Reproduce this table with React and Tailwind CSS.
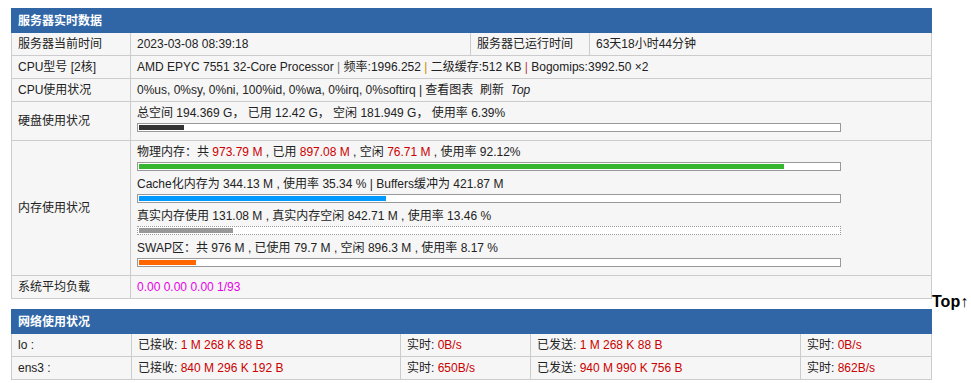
// Server probe: realtime data + network tables
const font = "font-['Liberation_Sans','Noto_Sans_CJK_SC',sans-serif]";
const cell = "border border-[#cccccc] px-[6px] py-[3px] leading-[16px] align-middle";

// Usage bar: 700px track inside 1px border + 1px padding
function Bar({ pct, color, dotted }) {
    return (
        <div className={`mt-[2px] mb-[5px] w-[704px] h-[9px] p-px bg-white border border-[#999999] ${dotted ? "border-dotted" : "border-solid"}`}>
            <div className={`h-full ${color}`} style={{ width: `${pct}%` }}></div>
        </div>
    );
}

const Red = ({ children }) => <span className="text-[#cc0000]">{children}</span>;

export default function App() {
    return (
        <div className={`pt-2 pl-[11px] text-[12px] text-[#222222] bg-white min-h-screen ${font}`}>
            <div className="flex items-end">
                <table className="w-[920px] table-fixed bg-[#f6f6f6]">
                    <colgroup>
                        <col className="w-[119px]" />
                        <col className="w-[340px]" />
                        <col className="w-[119px]" />
                        <col className="w-[342px]" />
                    </colgroup>
                    <thead>
                        <tr>
                            <th colSpan={4} className="h-[24px] bg-[#3066a6] border border-[#3066a6] px-[6px] text-left text-white font-bold leading-[16px]">
                                服务器实时数据
                            </th>
                        </tr>
                    </thead>
                    <tbody>
                        <tr>
                            <td className={cell}>服务器当前时间</td>
                            <td className={cell}>2023-03-08 08:39:18</td>
                            <td className={cell}>服务器已运行时间</td>
                            <td className={cell}>63天18小时44分钟</td>
                        </tr>
                        <tr>
                            <td className={cell}>CPU型号 [2核]</td>
                            <td colSpan={3} className={cell}>
                                AMD EPYC 7551 32-Core Processor <span className="text-[#777777]">|</span> 频率:1996.252{" "}
                                <span className="text-[#d08a00]">|</span> 二级缓存:512 KB <span className="text-[#b83a3a]">|</span> Bogomips:3992.50 ×2
                            </td>
                        </tr>
                        <tr>
                            <td className={cell}>CPU使用状况</td>
                            <td colSpan={3} className={cell}>
                                0%us, 0%sy, 0%ni, 100%id, 0%wa, 0%irq, 0%softirq | 查看图表&nbsp; 刷新&nbsp; <i>Top</i>
                            </td>
                        </tr>
                        <tr>
                            <td className={cell}>硬盘使用状况</td>
                            <td colSpan={3} className={cell}>
                                <div>总空间 194.369 G， 已用 12.42 G， 空闲 181.949 G， 使用率 6.39%</div>
                                <Bar pct={6.39} color="bg-[#333333]" />
                            </td>
                        </tr>
                        <tr>
                            <td className={cell}>内存使用状况</td>
                            <td colSpan={3} className={cell}>
                                <div>
                                    物理内存：共 <Red>973.79 M</Red> , 已用 <Red>897.08 M</Red> , 空闲 <Red>76.71 M</Red> , 使用率 92.12%
                                </div>
                                <Bar pct={92.12} color="bg-[#36b52e]" />
                                <div>Cache化内存为 344.13 M , 使用率 35.34 % | Buffers缓冲为 421.87 M</div>
                                <Bar pct={35.34} color="bg-[#0099ff]" />
                                <div>真实内存使用 131.08 M , 真实内存空闲 842.71 M , 使用率 13.46 %</div>
                                <Bar pct={13.46} color="bg-[#999999]" dotted />
                                <div>SWAP区：共 976 M , 已使用 79.7 M , 空闲 896.3 M , 使用率 8.17 %</div>
                                <Bar pct={8.17} color="bg-[#ff6600]" />
                            </td>
                        </tr>
                        <tr>
                            <td className={cell}>系统平均负载</td>
                            <td colSpan={3} className={`${cell} text-[#e600e6]`}>0.00 0.00 0.00 1/93</td>
                        </tr>
                    </tbody>
                </table>
                <div className="-mb-3 text-[16px] font-bold leading-[18px] text-black font-['Liberation_Sans',sans-serif]">Top↑</div>
            </div>

            <table className="mt-[10px] w-[920px] table-fixed bg-[#f6f6f6]">
                <colgroup>
                    <col className="w-[120px]" />
                    <col className="w-[269px]" />
                    <col className="w-[130px]" />
                    <col className="w-[270px]" />
                    <col className="w-[131px]" />
                </colgroup>
                <thead>
                    <tr>
                        <th colSpan={5} className="h-[24px] bg-[#3066a6] border border-[#3066a6] px-[6px] text-left text-white font-bold leading-[16px]">
                            网络使用状况
                        </th>
                    </tr>
                </thead>
                <tbody>
                    <tr>
                        <td className={cell}>lo :</td>
                        <td className={cell}>已接收: <Red>1 M 268 K 88 B</Red></td>
                        <td className={cell}>实时: <Red>0B/s</Red></td>
                        <td className={cell}>已发送: <Red>1 M 268 K 88 B</Red></td>
                        <td className={cell}>实时: <Red>0B/s</Red></td>
                    </tr>
                    <tr>
                        <td className={cell}>ens3 :</td>
                        <td className={cell}>已接收: <Red>840 M 296 K 192 B</Red></td>
                        <td className={cell}>实时: <Red>650B/s</Red></td>
                        <td className={cell}>已发送: <Red>940 M 990 K 756 B</Red></td>
                        <td className={cell}>实时: <Red>862B/s</Red></td>
                    </tr>
                </tbody>
            </table>
        </div>
    );
}
